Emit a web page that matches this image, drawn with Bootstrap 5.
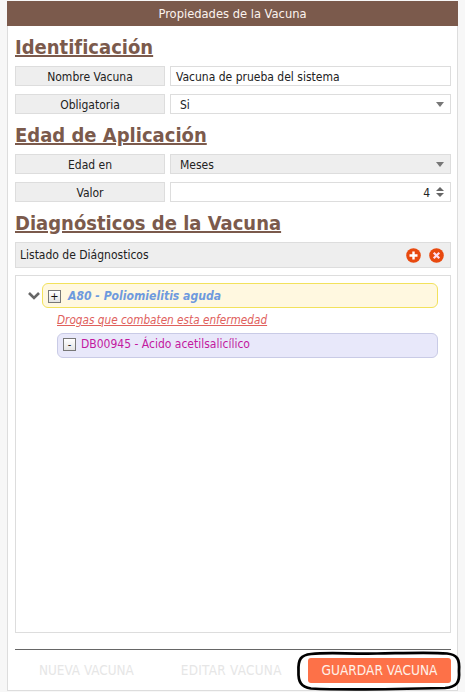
<!DOCTYPE html>
<html lang="es">
<head>
<meta charset="utf-8">
<title>Propiedades de la Vacuna</title>
<link rel="stylesheet" href="https://cdn.jsdelivr.net/npm/bootstrap@5.3.0/dist/css/bootstrap.min.css">
<style>
html,body{height:100%}
body{background:#f7f7f7;font-family:"DejaVu Sans Condensed","DejaVu Sans",sans-serif;font-size:12px;color:#222;overflow:hidden}
.frame{position:relative;width:451px;height:690px;margin:1px 0 0 7px;background:#fff;border:solid #ddd;border-width:0 1px 1px 1px;display:flex;flex-direction:column}
.titlebar{height:25px;margin:0 -1px;background:#7b5a4c;color:#fbf3ee;text-align:center;line-height:25px;font-size:12.8px;flex:none}
.body-area{padding:0 6px 0 7px;flex:1;display:flex;flex-direction:column;min-height:0}
.sect{font-size:20px;font-weight:700;color:#7b5a4c;text-decoration:underline;line-height:26px;margin:0;height:24px;text-decoration-thickness:2px;white-space:nowrap}
.first{margin-top:8px}
.sect-gap{margin-top:8px}
.frow{display:flex;gap:5px;height:20px;margin-top:8px}
.flabel{width:150px;flex:none;background:#eee;border:1px solid #ddd;text-align:center;line-height:20px}
.fval{flex:1;border:1px solid #ddd;background:#fff;padding:1px 9px 0;line-height:18px;display:flex;align-items:center;justify-content:space-between;min-width:0}
.fval.plain{padding-left:5px}
.fval.grey{background:#eee}
.caret-d{width:0;height:0;border-left:4.5px solid transparent;border-right:4.5px solid transparent;border-top:5px solid #777;margin-right:-3px;margin-top:-1px}
.spin{display:flex;flex-direction:column;gap:2px;margin-left:6px;margin-right:-3px;margin-top:-1px}
.spin i{display:block;width:0;height:0;border-left:4px solid transparent;border-right:4px solid transparent}
.spin i:first-child{border-bottom:4px solid #666}
.spin i:last-child{border-top:4px solid #666}
.listbar{height:26px;margin-top:8px;background:#eee;border:1px solid #ddd;display:flex;align-items:center;justify-content:space-between;padding:0 6px 0 4px;flex:none}
.tools{display:flex;gap:8px}
.treebox{height:358px;margin-top:7px;border:1px solid #ddd;background:#fff;padding:7px 12px 0 11px;flex:none}
.node-row{display:flex;align-items:center}
.chev{width:14px;flex:none;margin-right:1px}
.node-main{flex:1;height:25px;background:#fff8e0;border:1px solid #f2e25c;border-radius:6px;display:flex;align-items:center;padding:1px 5px 0;font-weight:700;font-style:italic;font-size:12.1px;color:#6e9ade}
.tog{width:13px;height:13px;border:1px solid #777;background:linear-gradient(#fff,#e4e4e4);display:inline-flex;align-items:center;justify-content:center;margin-right:7px;flex:none;font-style:normal;font-weight:400;color:#111;line-height:1;font-size:11px}
.druglink{display:block;margin:3px 0 0 30px;height:19px;line-height:19px;font-size:11.7px;color:#e0605c;font-style:italic;text-decoration:underline}
.node-sub{margin:3px 0 0 30px;height:25px;background:#e8e8fa;border:1px solid #c9cbe6;border-radius:6px;display:flex;align-items:center;padding:0 5px 3px;color:#c3189f}
.node-sub .tog{margin-right:5px}
.sep{border-top:1px solid #666;margin-top:16px;flex:none}
.btnbar{display:flex;align-items:flex-start;padding-top:8px;flex:none}
.ghost{color:#e6e6e6;font-size:13.4px;padding:0;background:none;border:0;white-space:nowrap;height:25px;line-height:25px}
.ghost1{margin-left:24px}
.ghost2{margin-left:47px;letter-spacing:.3px}
.savebtn{margin-left:auto;width:143px;height:25px;background:#fd7148;color:#fff1e8;border:0;border-radius:3px;font-size:13.6px;line-height:25px;padding:0}
.oval{position:absolute;left:289px;top:651px;width:164px;height:38px;overflow:visible;pointer-events:none}
</style>
</head>
<body>
<div class="frame">
  <div class="titlebar">Propiedades de la Vacuna</div>
  <div class="body-area">
    <h2 class="sect first">Identificación</h2>
    <div class="frow"><div class="flabel">Nombre Vacuna</div><div class="fval plain">Vacuna de prueba del sistema</div></div>
    <div class="frow"><div class="flabel">Obligatoria</div><div class="fval"><span>Si</span><span class="caret-d"></span></div></div>
    <h2 class="sect sect-gap">Edad de Aplicación</h2>
    <div class="frow"><div class="flabel">Edad en</div><div class="fval grey"><span>Meses</span><span class="caret-d"></span></div></div>
    <div class="frow"><div class="flabel">Valor</div><div class="fval justify-content-end">4<span class="spin"><i></i><i></i></span></div></div>
    <h2 class="sect sect-gap">Diagnósticos de la Vacuna</h2>
    <div class="listbar"><span>Listado de Diágnosticos</span>
      <span class="tools">
        <svg width="15" height="15" viewBox="0 0 15 15"><circle cx="7.500" cy="7.500" r="7.300" fill="#e8490f"/><path d="M7.500 3.500v8M3.500 7.500h8" stroke="#fff" stroke-width="2.400"/></svg>
        <svg width="15" height="15" viewBox="0 0 15 15"><circle cx="7.500" cy="7.500" r="7.300" fill="#e8490f"/><path d="M4.700 4.700l5.600 5.600M10.300 4.700l-5.600 5.600" stroke="#fde" stroke-width="2.200"/></svg>
      </span>
    </div>
    <div class="treebox">
      <div class="node-row">
        <svg class="chev" width="14" height="10" viewBox="0 0 14 10"><path d="M2 2l5 5 5-5" fill="none" stroke="#666" stroke-width="2.600"/></svg>
        <div class="node-main"><span class="tog">+</span>A80 - Poliomielitis aguda</div>
      </div>
      <a class="druglink" href="#">Drogas que combaten esta enfermedad</a>
      <div class="node-sub"><span class="tog">-</span>DB00945 - Ácido acetilsalicílico</div>
    </div>
    <div class="sep"></div>
    <div class="btnbar">
      <button class="ghost ghost1" type="button">NUEVA VACUNA</button>
      <button class="ghost ghost2" type="button">EDITAR VACUNA</button>
      <button class="savebtn" type="button">GUARDAR VACUNA</button>
    </div>
  </div>
  <svg class="oval" viewBox="0 0 164 38"><path d="M14 2C32 0 50 2 80 1.500C110 1 135 0 150 1.500C160 2.500 163 7 162 19C163 30 160 35 148 36C110 37 50 38.500 14 36.500C4 35 1 30 1.500 19C1 7 4 3 14 2Z" fill="none" stroke="#000" stroke-width="2.700"/></svg>
</div>
<script src="https://cdn.jsdelivr.net/npm/bootstrap@5.3.0/dist/js/bootstrap.bundle.min.js"></script>
</body>
</html>
